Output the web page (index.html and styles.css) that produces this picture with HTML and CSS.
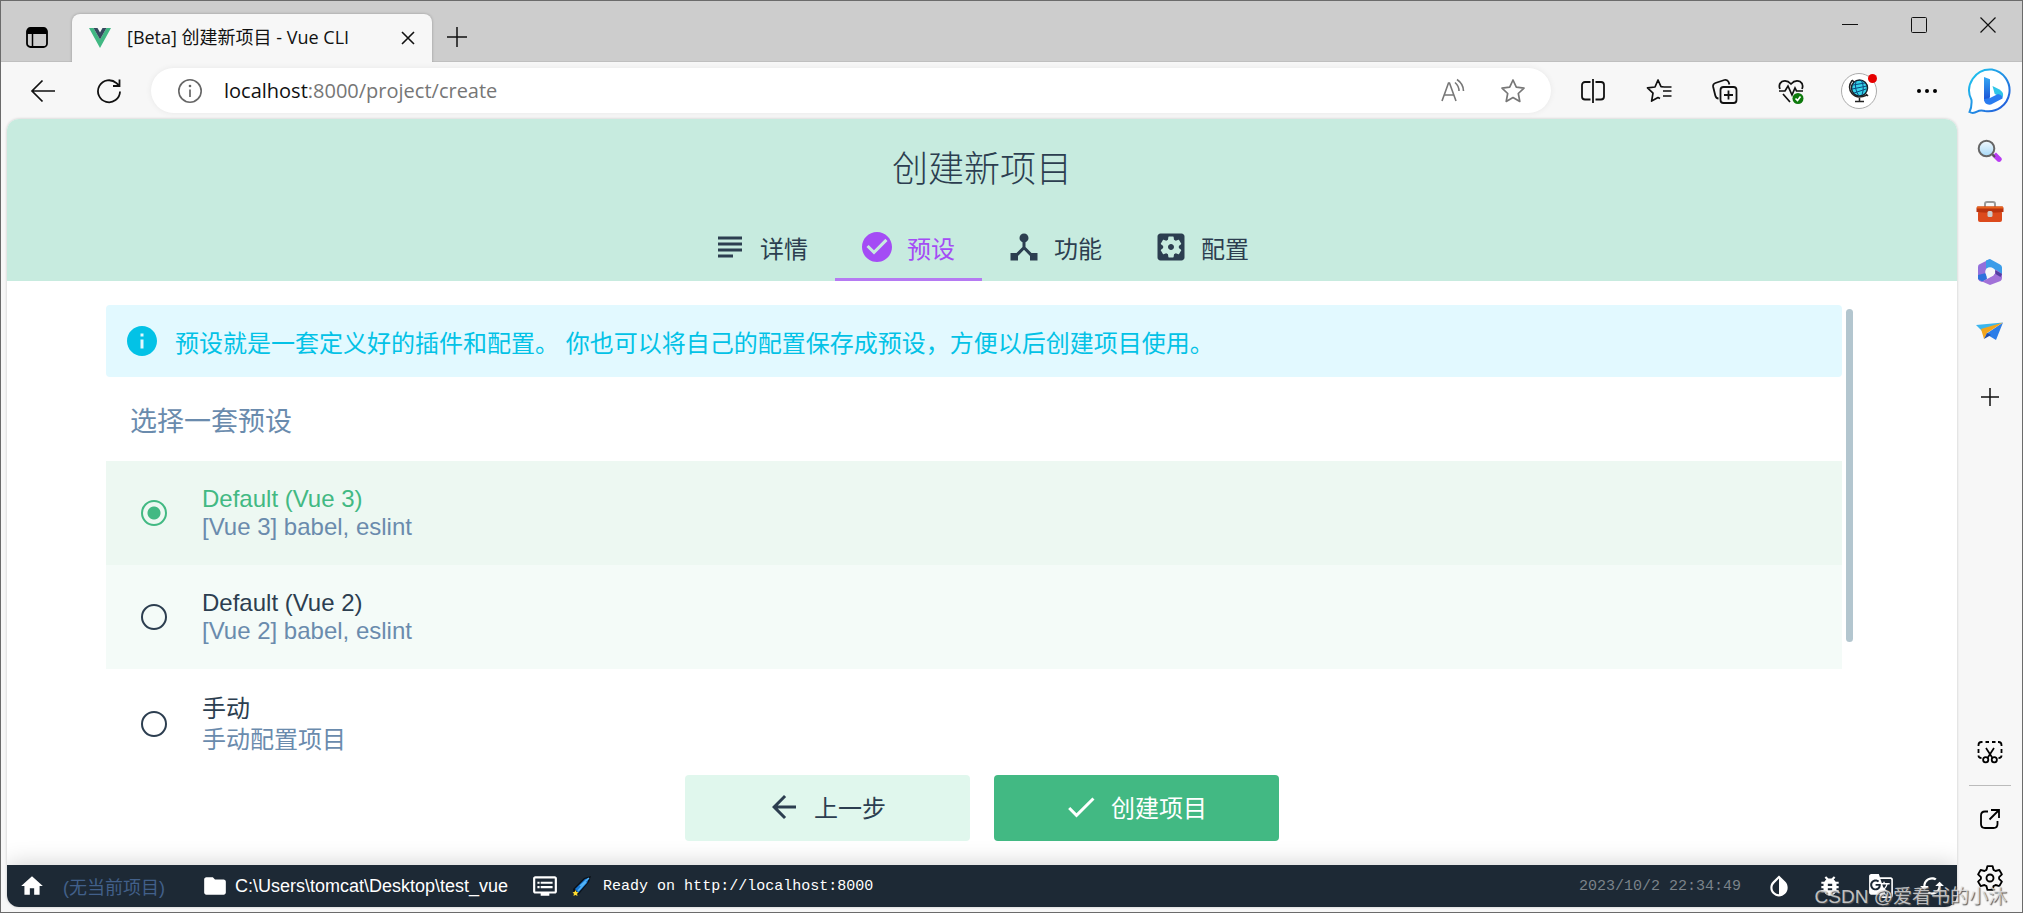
FILE: index.html
```html
<!DOCTYPE html>
<html lang="zh-CN">
<head>
<meta charset="utf-8">
<title>[Beta] 创建新项目 - Vue CLI</title>
<link rel="stylesheet" href="styles.css">
</head>
<body>
<div class="window">
  <header class="titlebar">
    <button class="tab-actions" aria-label="标签页操作"><svg width="24" height="24" viewBox="0 0 24 24"><rect x="2" y="3" width="20" height="19" rx="3.5" fill="none" stroke="#000" stroke-width="1.8"/><path d="M2 9V6a3 3 0 0 1 3-3h14a3 3 0 0 1 3 3v3z"/><path d="M7.5 9v13" stroke="#000" stroke-width="1.5"/></svg></button>
    <div class="tab">
      <svg class="favicon" width="24" height="24" viewBox="0 0 24 24"><path d="M1 2h4.500L12 13.500 18.500 2H23L12 22z" fill="#41b883"/><path d="M5.500 2h4L12 6.500 14.500 2h4L12 13.500z" fill="#35495e"/></svg>
      <span class="tab-title">[Beta] 创建新项目 - Vue CLI</span>
      <button class="tab-close" aria-label="关闭标签页"><svg width="14" height="14" viewBox="0 0 14 14"><path d="M1 1l12 12M13 1L1 13" stroke="#111" stroke-width="1.6"/></svg></button>
    </div>
    <button class="new-tab" aria-label="新建标签页"><svg width="22" height="22" viewBox="0 0 22 22"><path d="M11 1v20M1 11h20" stroke="#111" stroke-width="1.5"/></svg></button>
    <div class="window-controls">
      <button aria-label="最小化"><svg width="16" height="16" viewBox="0 0 16 16"><path d="M0 7.500h16" stroke="#111"/></svg></button>
      <button aria-label="最大化"><svg width="16" height="16" viewBox="0 0 16 16"><rect x=".5" y=".5" width="15" height="15" rx="1" fill="none" stroke="#111"/></svg></button>
      <button aria-label="关闭"><svg width="16" height="16" viewBox="0 0 16 16"><path d="M.5.5l15 15M15.500.5l-15 15" stroke="#111" stroke-width="1.200"/></svg></button>
    </div>
  </header>

  <nav class="toolbar">
    <button class="nav-button" aria-label="返回"><svg width="26" height="26" viewBox="0 0 26 26"><path d="M12.500 2.500L2 13l10.500 10.500M2 13h23" fill="none" stroke="#111" stroke-width="1.700"/></svg></button>
    <button class="nav-button" aria-label="刷新"><svg width="26" height="26" viewBox="0 0 26 26"><path d="M24 13.500A11 11 0 1 1 20.500 5.200L23 7.500M23.500 1.500V8H17" fill="none" stroke="#111" stroke-width="1.800"/></svg></button>
    <div class="address">
      <svg width="26" height="26" viewBox="0 0 26 26"><circle cx="13" cy="13" r="11.200" fill="none" stroke="#666" stroke-width="1.600"/><path d="M13 11.500V19" stroke="#666" stroke-width="1.700"/><circle cx="13" cy="8" r="1.300" fill="#666"/></svg>
      <a class="url" href="#"><span class="host">localhost</span>:8000/project/create</a>
      <button aria-label="大声朗读"><svg width="26" height="26" viewBox="0 0 26 26" fill="none" stroke="#777" stroke-width="1.600"><path d="M2 23L8.500 5h1L16 23M4.500 17h9"/><path d="M15 4.500q4 3.500 4 8.500M17 1.500q6.500 4.500 6.500 11.500"/></svg></button>
      <button aria-label="添加到收藏夹"><svg width="26" height="26" viewBox="0 0 26 26" fill="none" stroke="#777" stroke-width="1.700" stroke-linejoin="round"><path d="M13 2l3.300 7.200 7.700.9-5.700 5.400 1.500 7.900L13 19.500l-6.800 3.900 1.500-7.900L2 10.100l7.700-.9z"/></svg></button>
    </div>
    <div class="actions">
      <button aria-label="分屏"><svg width="26" height="26" viewBox="0 0 26 26" fill="none" stroke="#111" stroke-width="1.800"><path d="M13 1v24M10.500 4H5a3 3 0 0 0-3 3v11.500a3 3 0 0 0 3 3h5.500M15.500 4H21a3 3 0 0 1 3 3v11.500a3 3 0 0 1-3 3h-5.500"/></svg></button>
      <button aria-label="收藏夹"><svg width="26" height="26" viewBox="0 0 26 26" fill="none" stroke="#111" stroke-width="1.700" stroke-linejoin="round"><path d="M18 9l-3-.3L12 2 9 9l-7.500.9 5.500 5.300-1.400 7.900 6.400-3.500 2 1M17 13h8.500M17 18h8.500M18 9h7.500"/></svg></button>
      <button aria-label="集锦"><svg width="26" height="26" viewBox="0 0 26 26" fill="none" stroke="#111" stroke-width="1.800"><rect x="8.500" y="9" width="16" height="16" rx="3"/><path d="M16.500 12.500v9M12 17h9M6.500 20.500q-2.500 0-3.200-3L1.200 9q-.6-3 2.200-4l9-3q3-.8 4.200 2l.8 2.500"/></svg></button>
      <button aria-label="浏览器概要"><svg width="26" height="26" viewBox="0 0 26 26" fill="none" stroke="#111" stroke-width="1.700"><path d="M2 11Q0 6 4 3.500q5-2 9 2.500 4-4.500 9-2.500 4 2.500 2 7.500M1 13h6l3-5 4 9 3-7 1.500 3H25M5 16l7 8"/><circle cx="20" cy="20.500" r="5.500" fill="#0e7a0d" stroke="none"/><path d="M17.500 20.500l2 2 3-4" stroke="#fff"/></svg></button>
      <button class="profile" aria-label="用户配置"><svg width="36" height="36" viewBox="0 0 36 36"><circle cx="18" cy="18" r="17.500" fill="#fff" stroke="#aaa"/><circle cx="18.500" cy="15" r="8" fill="#35d3ea" stroke="#15222b" stroke-width="1.500"/><path d="M12 12l12-2M11 16l15-3M13 20l12-4M15 8q-2 8 3 15M20 7q4 6 1 15" fill="none" stroke="#0b4a80"/><path d="M11 7.500q-5 7 0 13t15 1.500M18.500 25v3M14 28.500h9M11 7l2 2M25 21l2 2" fill="none" stroke="#222" stroke-width="1.500"/></svg><span class="badge"></span></button>
      <button aria-label="设置及其他"><svg width="26" height="26" viewBox="0 0 26 26"><circle cx="5" cy="13" r="2"/><circle cx="13" cy="13" r="2"/><circle cx="21" cy="13" r="2"/></svg></button>
      <button class="bing" aria-label="必应"><svg width="48" height="48" viewBox="0 0 48 48"><defs><linearGradient id="bubble" x1="0" y1="0" x2="1" y2="1"><stop offset="0" stop-color="#20cdf0"/><stop offset="1" stop-color="#2350d8"/></linearGradient><linearGradient id="stem" x1="0" y1="0" x2="0" y2="1"><stop offset="0" stop-color="#35a8f4"/><stop offset="1" stop-color="#1747d1"/></linearGradient></defs><path d="M25 2.500a21 21 0 1 1-7 41.500q-5-1-8 .6-4 2.400-7.500.4 2.500-5 2-12A21 21 0 0 1 25 2.500z" fill="#fff" stroke="url(#bubble)" stroke-width="2"/><path d="M17 10l6 2.300V30l-3 6-3-3z" fill="url(#stem)"/><path d="M25.500 19l7 3.500q5 3 3.200 8l-6-2.500-2-1z" fill="#30c5e8"/><path d="M17 32l6-1 8-4q5 1 4.500 4.500L24 37.500q-6 1-7-4.500z" fill="#2a7cf0"/></svg></button>
    </div>
  </nav>

  <div class="workspace">
    <div class="app">
      <header class="project-header">
        <h1>创建新项目</h1>
        <div class="steps" role="tablist">
          <button class="step" role="tab"><svg class="icon" viewBox="0 0 24 24"><path d="M4 5h16v2H4zM4 9h16v2H4zM4 13h16v2H4zM4 17h10v2H4z"/></svg>详情</button>
          <button class="step active" role="tab" aria-selected="true"><svg class="icon" viewBox="0 0 24 24"><path d="M12 2C6.480 2 2 6.480 2 12s4.480 10 10 10 10-4.480 10-10S17.520 2 12 2zm-2 15l-5-5 1.410-1.410L10 14.170l7.590-7.590L19 8l-9 9z"/></svg>预设</button>
          <button class="step" role="tab"><svg class="icon" viewBox="0 0 24 24"><path d="M17 16l-4-4V8.820C14.160 8.400 15 7.300 15 6c0-1.660-1.340-3-3-3S9 4.340 9 6c0 1.300.84 2.400 2 2.820V12l-4 4H3v5h5v-3.050l4-4.200 4 4.200V21h5v-5h-4z"/></svg>功能</button>
          <button class="step" role="tab"><svg class="icon" viewBox="0 0 24 24"><path d="M12 10c-1.100 0-2 .9-2 2s.9 2 2 2 2-.9 2-2-.9-2-2-2zm7-7H5c-1.110 0-2 .9-2 2v14c0 1.100.89 2 2 2h14c1.110 0 2-.9 2-2V5c0-1.100-.89-2-2-2zm-1.750 9c0 .23-.02.46-.05.68l1.480 1.160c.13.11.17.3.08.45l-1.400 2.420c-.09.15-.27.21-.43.150l-1.740-.7c-.36.280-.76.510-1.180.690l-.26 1.850c-.03.170-.18.300-.35.300h-2.800c-.17 0-.32-.13-.35-.29l-.26-1.850c-.43-.18-.82-.41-1.180-.69l-1.740.7c-.16.060-.34 0-.43-.15l-1.400-2.420c-.09-.15-.05-.34.080-.45l1.480-1.160c-.03-.23-.05-.46-.05-.69 0-.23.020-.46.050-.68l-1.480-1.160c-.13-.11-.17-.3-.08-.45l1.400-2.420c.09-.15.270-.21.430-.15l1.740.7c.36-.28.760-.51 1.180-.69l.26-1.850c.03-.17.180-.3.350-.3h2.800c.17 0 .32.130.35.290l.26 1.850c.43.180.820.410 1.180.690l1.740-.7c.16-.06.340 0 .43.150l1.400 2.420c.09.150.050.340-.08.450l-1.480 1.160c.03.230.050.460.050.690z"/></svg>配置</button>
        </div>
      </header>

      <main class="content">
        <div class="scroller">
          <div class="presets">
            <p class="notice"><svg class="icon" viewBox="0 0 24 24"><path d="M12 2C6.480 2 2 6.480 2 12s4.480 10 10 10 10-4.480 10-10S17.520 2 12 2zm1 15h-2v-6h2v6zm0-8h-2V7h2v2z"/></svg>预设就是一套定义好的插件和配置。 你也可以将自己的配置保存成预设，方便以后创建项目使用。</p>
            <h2>选择一套预设</h2>
            <label class="preset selected"><input type="radio" name="preset" checked><span class="preset-text"><span class="name">Default (Vue 3)</span><span class="description">[Vue 3] babel, eslint</span></span></label>
            <label class="preset tinted"><input type="radio" name="preset"><span class="preset-text"><span class="name">Default (Vue 2)</span><span class="description">[Vue 2] babel, eslint</span></span></label>
            <label class="preset manual"><input type="radio" name="preset"><span class="preset-text"><span class="name">手动</span><span class="description">手动配置项目</span></span></label>
          </div>
          <div class="track"><div class="thumb"></div></div>
        </div>
        <div class="buttons">
          <button class="button"><svg class="icon" viewBox="0 0 24 24"><path d="M20 11H7.830l5.590-5.590L12 4l-8 8 8 8 1.410-1.410L7.830 13H20v-2z"/></svg>上一步</button>
          <button class="button primary"><svg class="icon" viewBox="0 0 24 24"><path d="M9 16.170L4.830 12l-1.420 1.410L9 19 21 7l-1.410-1.410z"/></svg>创建项目</button>
        </div>
      </main>

      <footer class="statusbar">
        <svg class="small-icon" viewBox="0 0 24 24"><path d="M10 20v-6h4v6h5v-8h3L12 3 2 12h3v8z"/></svg>
        <span class="no-project">(无当前项目)</span>
        <span class="path"><svg class="small-icon" viewBox="0 0 24 24"><path d="M10 4H4c-1.100 0-2 .9-2 2v12c0 1.100.9 2 2 2h16c1.100 0 2-.9 2-2V8c0-1.100-.9-2-2-2h-8l-2-2z"/></svg>C:\Users\tomcat\Desktop\test_vue</span>
        <span class="log"><svg class="small-icon" viewBox="0 0 24 24"><path d="M21 3H3c-1.100 0-2 .9-2 2v12c0 1.100.9 2 2 2h5v2h8v-2h5c1.100 0 2-.9 2-2V5c0-1.100-.9-2-2-2zm0 14H3V5h18v12zm-2-9H8v2h11V8zm0 4H8v2h11v-2zM7 8H5v2h2V8zm0 4H5v2h2v-2z"/></svg><svg class="comet" width="20" height="22" viewBox="0 0 20 22"><path d="M1 14L12 3l7-2-2 6L7 19l-5 2z" fill="#0a1018"/><path d="M3 14L13 4l4-1-2 5-9 10z" fill="#1878d4"/><path d="M8 11l9-8M6 16l8-9" stroke="#54b4f5" stroke-width="1.500"/><path d="M3.500 15l1 2 2 .3-1.400 1.500.4 2.200-2-1-2 1 .4-2.200L.5 17.300l2-.3z" fill="#ffdc31"/></svg><span class="mono">Ready on http://localhost:8000</span></span>
        <time class="mono time">2023/10/2 22:34:49</time>
        <div class="status-actions">
          <button aria-label="切换主题"><svg class="small-icon" viewBox="0 0 24 24"><path d="M17.660 7.930L12 2.270 6.340 7.930c-3.120 3.120-3.120 8.190 0 11.310C7.900 20.800 9.950 21.580 12 21.580s4.100-.78 5.660-2.340c3.120-3.120 3.120-8.190 0-11.310zM12 19.590c-1.600 0-3.110-.62-4.240-1.760C6.620 16.690 6 15.190 6 13.590s.62-3.110 1.760-4.240L12 5.100v14.490z"/></svg></button>
          <button aria-label="报告错误"><svg class="small-icon" viewBox="0 0 24 24"><path d="M20 8h-2.810c-.45-.78-1.070-1.450-1.820-1.960L17 4.410 15.590 3l-2.170 2.170C12.960 5.060 12.490 5 12 5c-.49 0-.96.06-1.410.170L8.410 3 7 4.410l1.620 1.630C7.880 6.550 7.260 7.220 6.810 8H4v2h2.090c-.05.330-.09.660-.09 1v1H4v2h2v1c0 .340.040.670.090 1H4v2h2.810c1.040 1.790 2.970 3 5.190 3s4.150-1.210 5.190-3H20v-2h-2.090c.05-.33.090-.66.090-1v-1h2v-2h-2v-1c0-.34-.04-.67-.09-1H20V8zm-6 8h-4v-2h4v2zm0-4h-4v-2h4v2z"/></svg></button>
          <button aria-label="翻译"><svg class="small-icon" viewBox="0 0 24 24"><path d="M21 4H11l-1-3H3c-1.100 0-2 .9-2 2v15c0 1.100.9 2 2 2h8l1 3h9c1.100 0 2-.9 2-2V6c0-1.100-.9-2-2-2zM7 16c-2.760 0-5-2.240-5-5s2.240-5 5-5c1.350 0 2.480.5 3.350 1.300L9.030 8.570c-.38-.36-1.040-.78-2.030-.78-1.740 0-3.150 1.440-3.150 3.210S5.260 14.210 7 14.210c2.010 0 2.840-1.440 2.920-2.410H7v-1.710h4.680c.07.310.120.610.120 1.020C11.800 13.970 9.890 16 7 16zm6.170-5.420h3.700c-.43 1.250-1.110 2.430-2.050 3.470-.31-.35-.6-.72-.86-1.100l-.79-2.370zm8.330 9.920c0 .550-.45 1-1 1H14l2-2.500-1.040-3.100 3.100 3.100.92-.92-3.300-3.250.02-.02c1.130-1.250 1.930-2.690 2.400-4.220H20v-1.300h-4.530V8h-1.290v1.290h-1.440L11.460 5.500h9.040c.55 0 1 .450 1 1v14z"/></svg></button>
          <button aria-label="重置"><svg class="small-icon" viewBox="0 0 24 24"><path d="M19 8l-4 4h3c0 3.310-2.690 6-6 6-1.010 0-1.970-.25-2.800-.7l-1.460 1.460C8.970 19.540 10.430 20 12 20c4.420 0 8-3.580 8-8h3l-4-4zM6 12c0-3.310 2.690-6 6-6 1.010 0 1.970.25 2.800.7l1.460-1.460C15.030 4.460 13.570 4 12 4c-4.420 0-8 3.580-8 8H1l4 4 4-4H6z"/></svg></button>
        </div>
      </footer>
    </div>

    <aside class="sidebar">
      <button aria-label="搜索"><svg width="28" height="28" viewBox="0 0 28 28"><defs><linearGradient id="lens" x1="0" y1="0" x2="0" y2="1"><stop offset="0" stop-color="#f3fafe"/><stop offset="1" stop-color="#a6d8f7"/></linearGradient></defs><path d="M16 18l4-3.500 5.500 5.500q1 1.500-.5 3t-3.500.5z" fill="#b93cf2"/><path d="M15 15l4 4" stroke="#555" stroke-width="2"/><circle cx="10.500" cy="10.500" r="7.800" fill="url(#lens)" stroke="#666" stroke-width="2"/></svg></button>
      <button aria-label="工具"><svg width="28" height="28" viewBox="0 0 28 28"><path d="M9 9V6q0-2 2-2h6q2 0 2 2v3" fill="none" stroke="#999" stroke-width="2"/><rect x="2" y="13" width="24" height="11" rx="2" fill="#dc4a1c"/><path d="M.5 10q0-1.500 1.500-1.500h24q1.500 0 1.500 1.500v4q-13.500 1.500-27 0z" fill="#b9330e"/><path d="M1 9.500h26" stroke="#e9651e" stroke-width="2"/><rect x="11.500" y="13" width="5" height="6" rx="1.500" fill="#ccc"/></svg></button>
      <button aria-label="Microsoft 365"><svg width="28" height="28" viewBox="0 0 28 28"><path d="M14 1L3 6.500Q2 7 2 9v11q0 2 1.500 3L6 24l4-3V11z" fill="#9370dc"/><path d="M2 17v4l4.500 2.500L11 21l-1-6z" fill="#2d71dc"/><path d="M10 2.500L14 1l10 5.500q2 1 2 3V17l-8-6-4-1-4 2z" fill="#3b9de9"/><path d="M26 16v4q0 2-1.500 3L14 27l-8-3.500 8-4 5-4 1-4z" fill="#a171d8"/><path d="M19 12l7 4-1.500 3-5-3z" fill="#543da0"/><circle cx="14" cy="14" r="4.800" fill="#f7f7f7"/></svg></button>
      <button aria-label="投放"><svg width="28" height="28" viewBox="0 0 28 28"><path d="M0 7l27-2.500L6 13z" fill="#3cb6ee"/><path d="M27 4.500L20 22 10 16z" fill="#2d7ee8"/><path d="M27 4.500L5 11l3 10 3-6z" fill="#f3a51c"/><path d="M8 21l3-6 4 2z" fill="#204ba8"/></svg></button>
      <button class="customize" aria-label="自定义"><svg width="28" height="28" viewBox="0 0 28 28"><path d="M14 5v18M5 14h18" stroke="#111" stroke-width="1.500"/></svg></button>
      <div class="sidebar-bottom">
        <button aria-label="截图"><svg width="28" height="28" viewBox="0 0 28 28" fill="none" stroke="#000" stroke-width="1.800"><path d="M2.500 8V7q0-3 3-3h1M9.500 4h3.500M16 4h3.500M22 4h.5q3 0 3 3v1M2.500 11v4M25.500 11v4M2.500 17.500q0 2.500 3 2.500M25.500 17.500q0 2.500-3 2.500"/><path d="M10 10l6.500 10M18 10l-6.500 10" stroke-width="1.700"/><circle cx="9.700" cy="21.800" r="2.600"/><circle cx="18.300" cy="21.800" r="2.600"/></svg></button>
        <hr>
        <button aria-label="在新窗口打开"><svg width="28" height="28" viewBox="0 0 28 28" fill="none" stroke="#000" stroke-width="1.800"><path d="M12 6.500H9q-4 0-4 4V19q0 4 4 4h8.500q4 0 4-4v-3M15 5h8v8M23 5l-9.500 9.500"/></svg></button>
        <button aria-label="设置"><svg width="28" height="28" viewBox="0 0 24 24" fill="none" stroke="#000" stroke-width="1.600" stroke-linejoin="round"><path d="M9.800 1.800h4.400l.8 3.200 1.800 1 3.200-.9 2.200 3.800-2.400 2.300v1.600l2.400 2.300-2.200 3.800-3.200-.9-1.800 1-.8 3.200H9.800L9 19l-1.800-1-3.200.9-2.200-3.800 2.400-2.300v-1.600L1.800 8.900 4 5.100l3.200.9L9 5z"/><circle cx="12" cy="12" r="3"/></svg></button>
      </div>
    </aside>
  </div>
  <div class="watermark">CSDN @爱看书的小沐</div>
</div>
</body>
</html>
```
FILE: styles.css
```css
* { box-sizing: border-box; }

body {
  margin: 0;
  font-family: "Liberation Sans", "Noto Sans CJK SC", sans-serif;
  color: #2c3e50;
}

button {
  display: flex;
  align-items: center;
  justify-content: center;
  padding: 0;
  border: 0;
  background: none;
  color: inherit;
  font: inherit;
}

svg { flex: none; display: block; }

.window {
  position: relative;
  display: flex;
  flex-direction: column;
  height: 100vh;
  border: 1px solid #6b6b6b;
  background: #f7f7f7;
}

.titlebar {
  display: flex;
  height: 61px;
  flex: none;
  background: #cdcdcd;
  border-bottom: 1px solid #bfbfbf;
  font-family: "Open Sans", "Noto Sans CJK SC", sans-serif;
  color: #111;
}

.tab-actions { width: 71px; padding-top: 12px; }

.tab {
  display: flex;
  align-items: center;
  width: 360px;
  height: 48px;
  margin-top: 13px;
  padding: 0 12px 0 16px;
  border-radius: 8px 8px 0 0;
  background: #f7f7f7;
  box-shadow: 0 0 3px #0004;
  clip-path: inset(-4px -4px 0 -4px);
}

.tab-title {
  flex: 1;
  margin-left: 15px;
  padding-bottom: 2px;
  font-size: 18px;
  line-height: 24px;
  white-space: nowrap;
}

.tab-close { width: 24px; }
.new-tab { width: 50px; padding-top: 12px; }

.window-controls { display: flex; height: 48px; margin-left: auto; }
.window-controls button { width: 69px; }

.toolbar {
  display: flex;
  align-items: center;
  flex: none;
  height: 57px;
  padding-left: 9px;
}

.nav-button { width: 66px; }

.address {
  display: flex;
  flex: 1;
  align-items: center;
  height: 45px;
  margin: 0 9px;
  padding: 0 8px 0 26px;
  border-radius: 23px;
  background: #fff;
  box-shadow: 0 0 6px #0001;
}

.address button { width: 60px; }

.url {
  flex: 1;
  margin-left: 21px;
  color: #767676;
  font-family: "Open Sans", sans-serif;
  font-size: 20px;
  text-decoration: none;
}

.host { color: #111; }

.actions { display: flex; align-items: center; }
.actions button { width: 66px; }
.actions .profile { position: relative; width: 70px; }
.actions .bing { width: 62px; }

.badge {
  position: absolute;
  top: 1px;
  right: 17px;
  width: 9px;
  height: 9px;
  border-radius: 50%;
  background: #e60000;
}

.workspace {
  display: flex;
  flex: 1;
  min-height: 0;
  padding: 0 0 5px 6px;
}

.app {
  display: flex;
  flex: 1;
  flex-direction: column;
  min-width: 0;
  overflow: hidden;
  border-radius: 12px;
  background: #fff;
  box-shadow: 0 0 3px #0003;
}

.project-header { flex: none; background: #c7ebdf; }

h1 {
  margin: 0;
  padding-top: 4px;
  font-size: 36px;
  font-weight: 300;
  line-height: 93px;
  text-align: center;
}

.icon { width: 36px; height: 36px; fill: currentColor; }
.small-icon { width: 26px; height: 26px; fill: currentColor; }

.steps { display: flex; justify-content: center; }

.step {
  gap: 12px;
  height: 65px;
  padding: 0 27px 3px 24px;
  font-size: 24px;
}

.step.active { color: #a44cf5; box-shadow: inset 0 -3px #b57af2; }

.content {
  display: flex;
  flex: 1;
  flex-direction: column;
  min-height: 0;
  padding: 24px 99px;
}

.scroller { display: flex; flex: 1; min-height: 0; }
.presets { flex: 1; overflow: hidden; }
.track { width: 16px; padding: 4px; }
.thumb { width: 7px; height: 75%; border-radius: 4px; background: #b3c6cf; }

.notice {
  display: flex;
  align-items: center;
  gap: 15px;
  height: 72px;
  margin: 0;
  padding: 0 18px;
  border-radius: 4px;
  background: #e2f9ff;
  color: #03c2e6;
  font-size: 24px;
}

h2 {
  margin: 0;
  padding: 6px 24px 0;
  color: #6a8bad;
  font-size: 27px;
  font-weight: 400;
  line-height: 78px;
}

.preset {
  display: flex;
  align-items: center;
  gap: 35px;
  padding: 24px 35px;
  font-size: 24px;
  line-height: 28px;
}

.preset.selected { background: #edf8f2; }
.preset.selected .name { color: #42b983; }
.preset.tinted { background: #f4fbf8; }
.preset.manual { line-height: 31px; }

.preset input {
  appearance: none;
  width: 26px;
  height: 26px;
  margin: 0;
  border: 2px solid #2c3e50;
  border-radius: 50%;
}

.preset input:checked {
  border-color: #42b983;
  background: radial-gradient(circle, #42b983 6px, transparent 7px);
}

.preset-text { display: flex; flex-direction: column; }
.description { color: #6a8bad; }

.buttons { display: flex; justify-content: center; gap: 24px; padding-top: 18px; }

.button {
  gap: 12px;
  width: 285px;
  height: 66px;
  padding: 0 3px 3px 0;
  border-radius: 4px;
  background: #e0f7ed;
  font-size: 24px;
}

.button.primary { background: #42b983; color: #fff; }

.statusbar {
  display: flex;
  flex: none;
  align-items: center;
  height: 42px;
  padding-left: 12px;
  background: #1d2935;
  box-shadow: 0 0 24px #0003;
  color: #fff;
  font-size: 18px;
}

.no-project { margin-left: 18px; color: #42608a; }
.path { display: flex; align-items: center; gap: 7px; margin-left: 37px; }
.log { display: flex; align-items: center; margin-left: 24px; }
.comet { margin: 0 11px 0 14px; }
.mono { font-family: "Liberation Mono", monospace; font-size: 15px; }
.time { margin-left: auto; color: #7b838a; }
.status-actions { display: flex; margin-left: 12px; }
.status-actions button { width: 51px; }

.sidebar {
  display: flex;
  flex-direction: column;
  align-items: center;
  width: 65px;
  flex: none;
  padding-top: 3px;
}

.sidebar button { width: 100%; height: 60px; }
.sidebar .customize { height: 70px; }

.sidebar-bottom {
  display: flex;
  flex-direction: column;
  width: 42px;
  margin-top: auto;
}

.sidebar-bottom button:last-child { height: 58px; }
.sidebar hr { width: 42px; margin: 3px 0; border: 0; border-top: 1px solid #bbb; }

.watermark {
  position: absolute;
  right: 15px;
  bottom: 4px;
  color: #e4e4e4cc;
  font-size: 19px;
  text-shadow: 1px 1px 1px #555;
}
```
